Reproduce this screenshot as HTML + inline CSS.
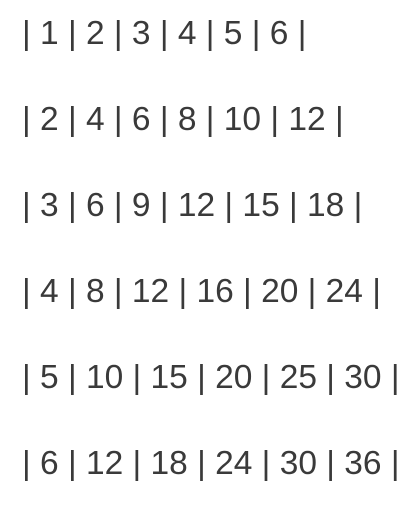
<!DOCTYPE html>
<html><head><meta charset="utf-8"><style>
html,body{margin:0;padding:0;background:#fff;width:415px;height:512px;overflow:hidden}
.l{position:absolute;left:22px;font-family:"Liberation Sans",sans-serif;font-size:33.5px;color:#3a3a3a;white-space:pre;line-height:1}
</style></head><body>
<div class="l" style="top:17px">| 1 | 2 | 3 | 4 | 5 | 6 |</div>
<div class="l" style="top:103px">| 2 | 4 | 6 | 8 | 10 | 12 |</div>
<div class="l" style="top:189px">| 3 | 6 | 9 | 12 | 15 | 18 |</div>
<div class="l" style="top:275px">| 4 | 8 | 12 | 16 | 20 | 24 |</div>
<div class="l" style="top:361px">| 5 | 10 | 15 | 20 | 25 | 30 |</div>
<div class="l" style="top:447px">| 6 | 12 | 18 | 24 | 30 | 36 |</div>
</body></html>
